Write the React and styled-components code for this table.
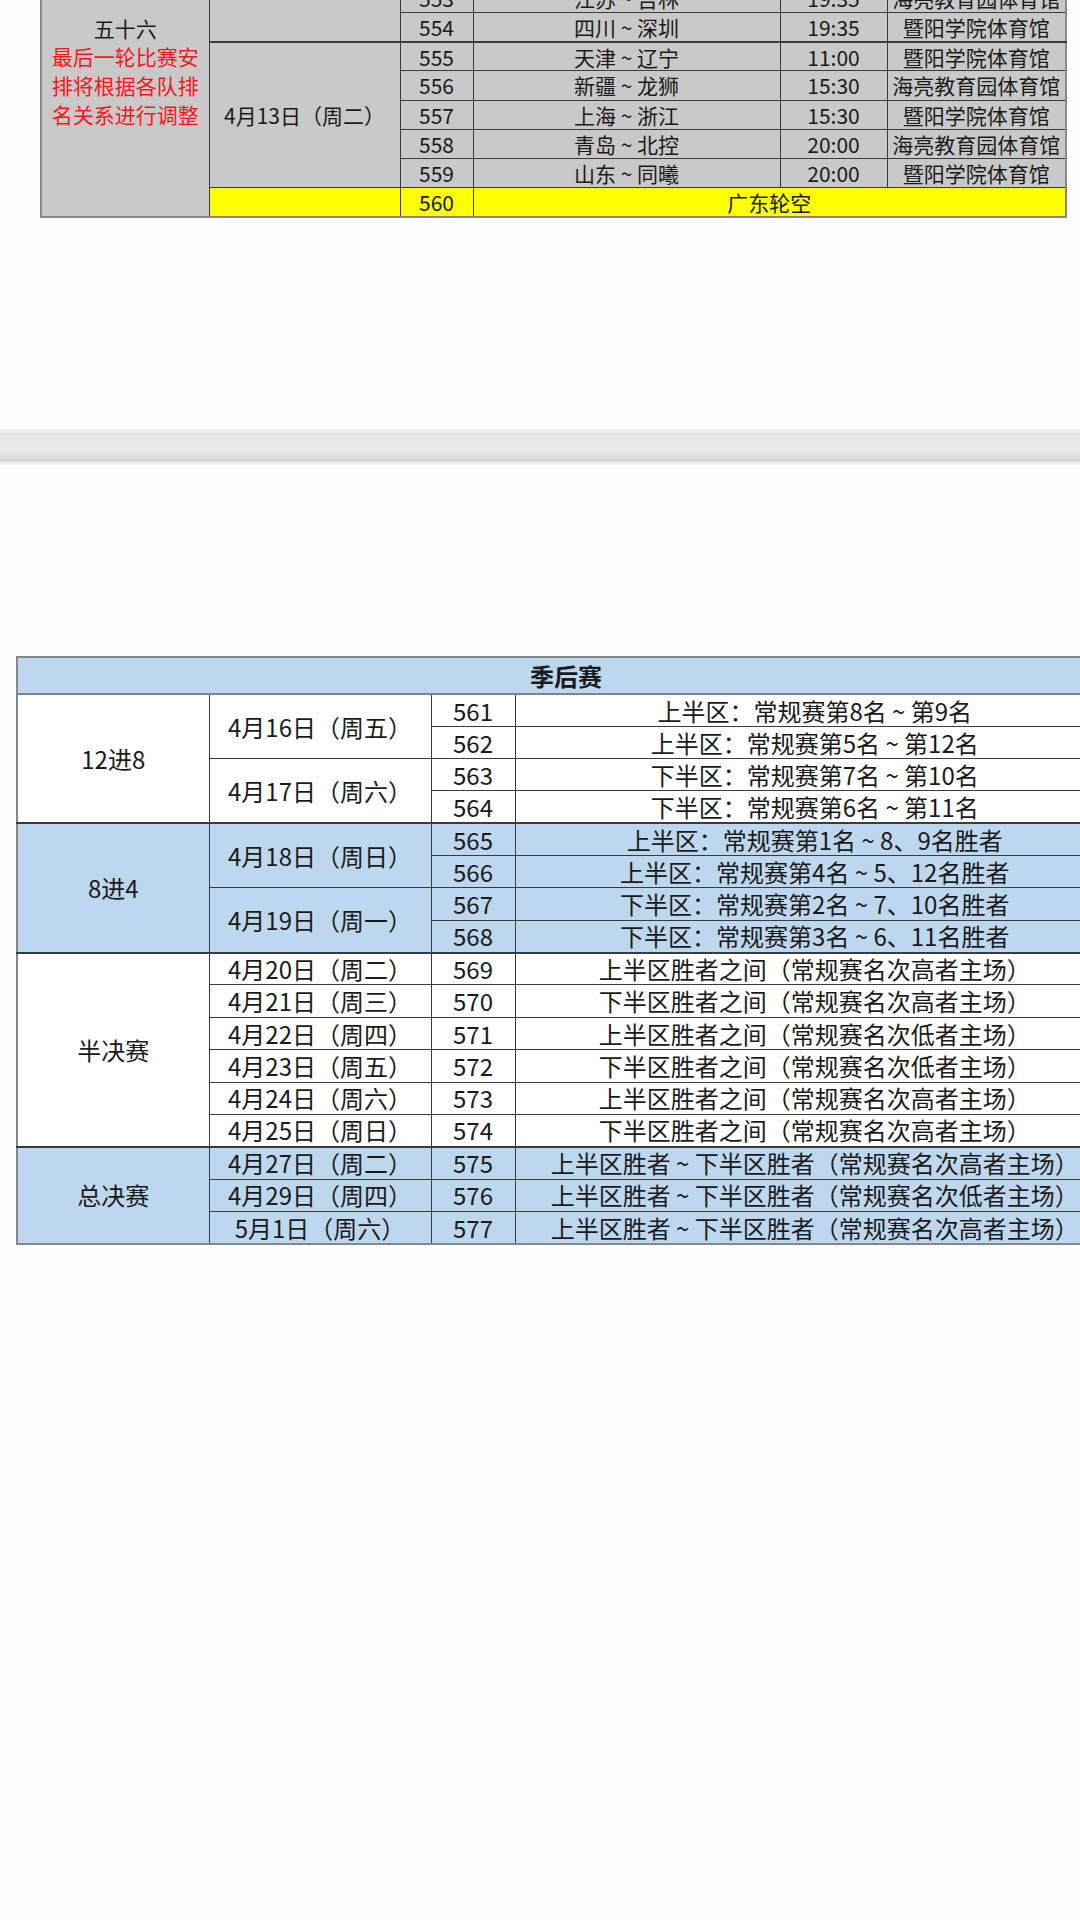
import React from 'react'
import styled, { createGlobalStyle } from 'styled-components'

const GlobalStyle = createGlobalStyle`
  html, body {
    margin: 0;
    padding: 0;
    background: #fdfdfd;
    overflow-x: hidden;
  }
  body {
    font-family: "Noto Sans CJK SC", "Noto Sans", sans-serif;
    color: #1a1a1a;
  }
`

const Page = styled.div`
  width: 1080px;
  height: 1920px;
  overflow: hidden;
  background: #fdfdfd;
`

const RoundWrap = styled.div`
  margin-top: -76px;
  padding-left: 40px;
`

const Sheet = styled.table`
  border-collapse: collapse;
  table-layout: fixed;
  width: ${props => props.$width}px;
  font-size: ${props => props.$size}px;
  border: 2px solid #878787;
`

const Row = styled.tr`
  height: ${props => props.$h}px;
`

const Cell = styled.td`
  border: 1px solid #3b3b3b;
  border-top: ${props => props.$thick ? '2px solid #3b3b3b' : '1px solid #3b3b3b'};
  background: ${props => props.$bg || 'transparent'};
  text-align: center;
  vertical-align: middle;
  padding: 0;
  line-height: 1.15;
  white-space: nowrap;
`

const HeadCell = styled.th`
  border-bottom: 2px solid #7b8590;
  background: #bdd7ee;
  font-weight: 700;
  text-align: center;
  padding: 0;
  height: 34px;
`

const RoundName = styled.div`
  line-height: 28.7px;
`

const Note = styled.div`
  color: #f7161f;
  line-height: 28.7px;
`

const Wave = styled.span`
  display: inline-block;
  width: 1em;
  text-align: center;
`

const Divider = styled.div`
  margin-top: 211px;
  height: 36px;
  background: linear-gradient(
    to bottom,
    #f3f3f3 0px,
    #efefef 3px,
    #e2e1e6 4px,
    #e9e8ed 10px,
    #e9e8ed 22px,
    #dcdbe0 29px,
    #cfced3 32px,
    #ebebeb 33px,
    #f6f6f6 36px
  );
`

const PlayoffWrap = styled.div`
  margin-top: 191px;
  padding-left: 16px;
`

const GRAY = '#c9c9c9'
const YELLOW = '#ffff00'
const BLUE = '#bdd7ee'
const WHITE = '#ffffff'

// splits on ～ so the wave sits in a full-width slot with a small glyph
const Txt = ({ children }) => {
  if (!children) return null
  const parts = children.split('～')
  return parts.map((p, i) => (
    <React.Fragment key={i}>
      {i > 0 && <Wave>~</Wave>}
      {p}
    </React.Fragment>
  ))
}

const roundRows = [
  { no: '551', match: '', time: '', venue: '' },
  { no: '552', match: '', time: '', venue: '' },
  { no: '553', match: '江苏～吉林', time: '19:35', venue: '海亮教育园体育馆' },
  { no: '554', match: '四川～深圳', time: '19:35', venue: '暨阳学院体育馆' },
  { no: '555', match: '天津～辽宁', time: '11:00', venue: '暨阳学院体育馆' },
  { no: '556', match: '新疆～龙狮', time: '15:30', venue: '海亮教育园体育馆' },
  { no: '557', match: '上海～浙江', time: '15:30', venue: '暨阳学院体育馆' },
  { no: '558', match: '青岛～北控', time: '20:00', venue: '海亮教育园体育馆' },
  { no: '559', match: '山东～同曦', time: '20:00', venue: '暨阳学院体育馆' }
]

const playoffs = [
  {
    stage: '12进8',
    bg: WHITE,
    days: [
      { date: '4月16日（周五）', games: [['561', '上半区：常规赛第8名～第9名'], ['562', '上半区：常规赛第5名～第12名']] },
      { date: '4月17日（周六）', games: [['563', '下半区：常规赛第7名～第10名'], ['564', '下半区：常规赛第6名～第11名']] }
    ]
  },
  {
    stage: '8进4',
    bg: BLUE,
    days: [
      { date: '4月18日（周日）', games: [['565', '上半区：常规赛第1名～8、9名胜者'], ['566', '上半区：常规赛第4名～5、12名胜者']] },
      { date: '4月19日（周一）', games: [['567', '下半区：常规赛第2名～7、10名胜者'], ['568', '下半区：常规赛第3名～6、11名胜者']] }
    ]
  },
  {
    stage: '半决赛',
    bg: WHITE,
    days: [
      { date: '4月20日（周二）', games: [['569', '上半区胜者之间（常规赛名次高者主场）']] },
      { date: '4月21日（周三）', games: [['570', '下半区胜者之间（常规赛名次高者主场）']] },
      { date: '4月22日（周四）', games: [['571', '上半区胜者之间（常规赛名次低者主场）']] },
      { date: '4月23日（周五）', games: [['572', '下半区胜者之间（常规赛名次低者主场）']] },
      { date: '4月24日（周六）', games: [['573', '上半区胜者之间（常规赛名次高者主场）']] },
      { date: '4月25日（周日）', games: [['574', '下半区胜者之间（常规赛名次高者主场）']] }
    ]
  },
  {
    stage: '总决赛',
    bg: BLUE,
    days: [
      { date: '4月27日（周二）', games: [['575', '上半区胜者～下半区胜者（常规赛名次高者主场）']] },
      { date: '4月29日（周四）', games: [['576', '上半区胜者～下半区胜者（常规赛名次低者主场）']] },
      { date: '5月1日（周六）', games: [['577', '上半区胜者～下半区胜者（常规赛名次高者主场）']] }
    ]
  }
]

const RoundTable = () => {
  const rowH = 29.2
  return (
    <RoundWrap>
      <Sheet $width={1025} $size={21}>
        <colgroup>
          <col style={{ width: 168 }} />
          <col style={{ width: 191 }} />
          <col style={{ width: 73 }} />
          <col style={{ width: 307 }} />
          <col style={{ width: 107 }} />
          <col style={{ width: 179 }} />
        </colgroup>
        <tbody>
          {roundRows.map((r, i) => (
            <Row key={r.no} $h={rowH}>
              {i === 0 && (
                <Cell rowSpan={10} $bg={GRAY}>
                  <RoundName>五十六</RoundName>
                  <Note>最后一轮比赛安</Note>
                  <Note>排将根据各队排</Note>
                  <Note>名关系进行调整</Note>
                </Cell>
              )}
              {i === 0 && <Cell rowSpan={4} $bg={GRAY} />}
              {i === 4 && <Cell rowSpan={5} $bg={GRAY} $thick>4月13日（周二）</Cell>}
              <Cell $bg={GRAY} $thick={i === 4}>{r.no}</Cell>
              <Cell $bg={GRAY} $thick={i === 4}><Txt>{r.match}</Txt></Cell>
              <Cell $bg={GRAY} $thick={i === 4}>{r.time}</Cell>
              <Cell $bg={GRAY} $thick={i === 4}>{r.venue}</Cell>
            </Row>
          ))}
          <Row $h={rowH}>
            <Cell $bg={YELLOW} />
            <Cell $bg={YELLOW}>560</Cell>
            <Cell $bg={YELLOW} colSpan={3}>广东轮空</Cell>
          </Row>
        </tbody>
      </Sheet>
    </RoundWrap>
  )
}

const PlayoffTable = () => {
  const rowH = 32.35
  return (
    <PlayoffWrap>
      <Sheet $width={1098} $size={24}>
        <colgroup>
          <col style={{ width: 192 }} />
          <col style={{ width: 222 }} />
          <col style={{ width: 84 }} />
          <col style={{ width: 600 }} />
        </colgroup>
        <thead>
          <tr>
            <HeadCell colSpan={4}>季后赛</HeadCell>
          </tr>
        </thead>
        <tbody>
          {playoffs.map(group => {
            const total = group.days.reduce((n, d) => n + d.games.length, 0)
            return group.days.map((day, di) =>
              day.games.map(([no, text], gi) => {
                const groupStart = di === 0 && gi === 0
                return (
                  <Row key={no} $h={rowH}>
                    {groupStart && (
                      <Cell rowSpan={total} $bg={group.bg} $thick>{group.stage}</Cell>
                    )}
                    {gi === 0 && (
                      <Cell rowSpan={day.games.length} $bg={group.bg} $thick={groupStart}>{day.date}</Cell>
                    )}
                    <Cell $bg={group.bg} $thick={groupStart}>{no}</Cell>
                    <Cell $bg={group.bg} $thick={groupStart}><Txt>{text}</Txt></Cell>
                  </Row>
                )
              })
            )
          })}
        </tbody>
      </Sheet>
    </PlayoffWrap>
  )
}

const App = () => (
  <Page>
    <GlobalStyle />
    <RoundTable />
    <Divider />
    <PlayoffTable />
  </Page>
)

export default App
